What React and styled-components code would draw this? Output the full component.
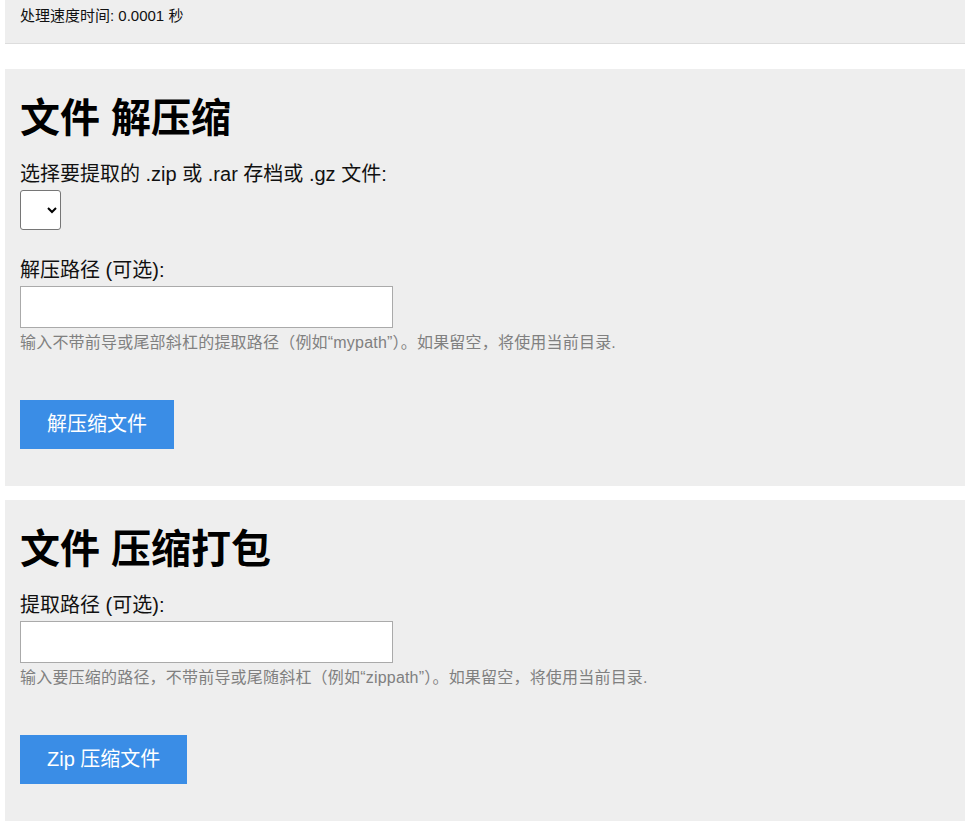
import React from 'react';
import styled, { createGlobalStyle } from 'styled-components';

const GlobalStyle = createGlobalStyle`
  body {
    margin: 0;
    background: #fff;
    font-family: "Liberation Sans", Arial, "Noto Sans CJK SC", sans-serif;
    color: #111;
  }
`;

const Page = styled.div`
  padding: 0 0 10px 5px;
`;

const StatusBar = styled.div`
  background-color: #eee;
  border-bottom: 1px solid #ddd;
  padding: 7px 15px 18px;
  font-size: 15px;
  line-height: 18px;
  color: #111;
  margin-bottom: 25px;
`;

const Section = styled.section`
  background-color: #eee;
  padding: 25px 15px 37px;
  margin-bottom: 14px;
`;

const Title = styled.h1`
  margin: 0 0 20px;
  font-size: 40px;
  line-height: 48px;
  font-weight: bold;
  color: #000;
`;

const Label = styled.label`
  display: block;
  font-size: 20px;
  line-height: 24px;
  color: #111;
  margin-bottom: 4px;
`;

const Select = styled.select`
  display: block;
  width: 41px;
  height: 40px;
  border: 1px solid #767676;
  border-radius: 3px;
  background: #fff;
  margin-bottom: 28px;
  font-size: 16px;
`;

const TextInput = styled.input`
  display: block;
  box-sizing: border-box;
  width: 373px;
  height: 42px;
  border: 1px solid #aaa;
  background: #fff;
  padding: 0 10px;
  font-size: 16px;
  margin: 0;
`;

const Hint = styled.p`
  margin: 5px 0 47px;
  font-size: 16px;
  line-height: 20px;
  letter-spacing: 0.2px;
  color: #808080;
`;

const Button = styled.button`
  display: block;
  background-color: #3a8de6;
  color: #fff;
  border: none;
  padding: 14px 27px;
  font-family: inherit;
  font-size: 20px;
  line-height: 21px;
  cursor: pointer;
`;

const App = () => {
  return (
    <Page>
      <GlobalStyle />
      <StatusBar>处理速度时间: 0.0001 秒</StatusBar>

      <Section>
        <Title>文件 解压缩</Title>
        <Label>选择要提取的 .zip 或 .rar 存档或 .gz 文件:</Label>
        <Select defaultValue="">
          <option value=""></option>
        </Select>
        <Label>解压路径 (可选):</Label>
        <TextInput type="text" />
        <Hint>输入不带前导或尾部斜杠的提取路径（例如“mypath”）。如果留空，将使用当前目录.</Hint>
        <Button>解压缩文件</Button>
      </Section>

      <Section>
        <Title>文件 压缩打包</Title>
        <Label>提取路径 (可选):</Label>
        <TextInput type="text" />
        <Hint>输入要压缩的路径，不带前导或尾随斜杠（例如“zippath”）。如果留空，将使用当前目录.</Hint>
        <Button>Zip 压缩文件</Button>
      </Section>
    </Page>
  );
};

export default App;
